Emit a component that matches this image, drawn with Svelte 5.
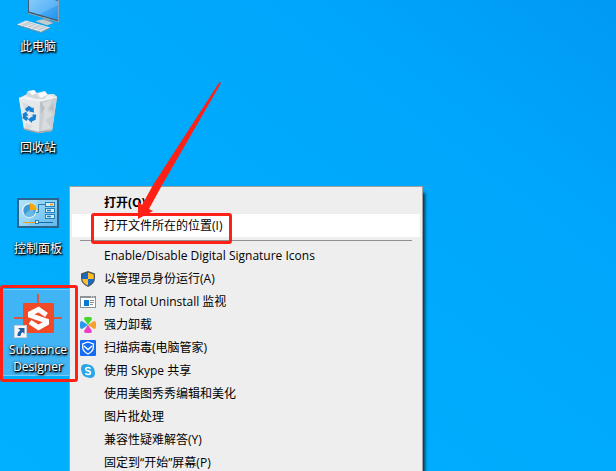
<script>
  const shortcuts = [
    { id: 'computer', label: '此电脑' },
    { id: 'bin', label: '回收站' },
    { id: 'panel', label: '控制面板' },
    { id: 'substance', label: 'Substance Designer', selected: true }
  ];

  const groups = [
    [
      { label: '打开(O)', strong: true },
      { label: '打开文件所在的位置(I)', active: true }
    ],
    [
      { label: 'Enable/Disable Digital Signature Icons' },
      { label: '以管理员身份运行(A)', icon: 'shield' },
      { label: '用 Total Uninstall 监视', icon: 'window' },
      { label: '强力卸载', icon: 'clover' },
      { label: '扫描病毒(电脑管家)', icon: 'guard' },
      { label: '使用 Skype 共享', icon: 'skype' },
      { label: '使用美图秀秀编辑和美化' },
      { label: '图片批处理' },
      { label: '兼容性疑难解答(Y)' },
      { label: '固定到“开始”屏幕(P)' }
    ]
  ];
</script>

<main class="desktop">
  <div class="shortcuts">
    {#each shortcuts as item}
      <button class="shortcut" class:selected={item.selected}>
        <svg class="picture" viewBox="0 0 48 50" aria-hidden="true">
          {#if item.id === 'computer'}
            <defs>
              <linearGradient id="screen" x1="0" y1="0" x2="1" y2="1">
                <stop offset="0" stop-color="#7cc8fb" />
                <stop offset="0.5" stop-color="#4fb0f8" />
                <stop offset="1" stop-color="#2193ee" />
              </linearGradient>
            </defs>
            <path d="M14 4L45 12V34L14 25Z" fill="#3c5a70" />
            <path d="M15 5L44 13V32L15 23.500Z" fill="url(#screen)" />
            <path d="M15 5L44 13V17L25 26.500L15 23.500Z" fill="#fff" opacity="0.15" />
            <path d="M44.500 12V34L14 25.200" fill="none" stroke="#8fa3b0" stroke-width="1" />
            <path d="M29 29L36 31V33L40 35L33 37.500L21 33.500L26 31.500L29 32.500Z" fill="#8fa1ab" />
            <path d="M22 33L28 31.500L39 35L33 37Z" fill="#c3ced4" />
            <path d="M3 36.500L12 32.500L36 39.500L27 44Z" fill="#eef1f3" />
            <path d="M3 36.500L27 44L36 39.500V40.500L27 45L3 37.500Z" fill="#7d8e99" />
            <path d="M6 35.500L29 42.500M8.500 34.500L31.500 41.500M11 33.500L34 40.500M9 38L17 34M14 39.500L22 35.500M19 41L27 37M24 42.500L32 38.500" stroke="#aebac1" stroke-width="0.700" />
          {:else if item.id === 'bin'}
            <path d="M5 9L11 6L40 5L43 8L38 42L24 44L10 40Z" fill="#dfe3e6" />
            <path d="M5 9L26 12L25 44L10 40Z" fill="#e6e9eb" />
            <path d="M26 12L43 8L38 42L25 44Z" fill="#c9ced2" />
            <path d="M8 9L12 6L14 2L20 1L23 4L31 2L34 6L39 7L38 10L26 12Z" fill="#f0f2f3" />
            <path d="M14 2L18 6L23 4L26 9L31 6L34 6L30 10L22 10L12 7Z" fill="#d2d7da" />
            <path d="M16 3L20 1L22 4L18 6ZM26 5L31 3L33 6L27 9Z" fill="#fff" />
            <path d="M29 14L38 11L33 21L39 25L32 31L37 39L27 42L30 27Z" fill="#d8dcdf" />
            <path d="M26 12L31 19L27 25ZM39 14L35 20L40 22Z" fill="#b9c0c5" />
            <path d="M8 13L15 16L11 22ZM12 34L19 37L15 41L11 39Z" fill="#d8dcdf" />
            <path d="M5 9L26 12L43 8" fill="none" stroke="#f4f6f7" stroke-width="1" />
            <path d="M10 40L24 43.500L38 41.500" fill="none" stroke="#9ca7ad" stroke-width="1.500" />
            <g fill="none" stroke="#1580d2" stroke-width="3.600">
              <path d="M12 21.500L15 19L18 21" />
              <path d="M20.500 25.500L20 29.500L16.500 31" />
              <path d="M13.500 30.500L10.500 28.500L11 25" />
            </g>
            <path d="M19.500 18L20 23.500L15 22.500ZM18 27.500V34L14 30.500ZM8 25.500L12 22.500L14.500 27Z" fill="#1580d2" />
          {:else if item.id === 'panel'}
            <defs>
              <linearGradient id="board" x1="0" y1="0" x2="1" y2="1">
                <stop offset="0" stop-color="#a4ddf8" />
                <stop offset="0.500" stop-color="#88cff5" />
                <stop offset="1" stop-color="#61b8ec" />
              </linearGradient>
            </defs>
            <rect x="3" y="8" width="42" height="30" fill="#27648f" />
            <rect x="5" y="10" width="38" height="26" fill="url(#board)" />
            <path d="M5 10H24L14 36H5Z" fill="#fff" opacity="0.15" />
            <circle cx="15.500" cy="20.500" r="7.500" fill="#e7f5fc" />
            <circle cx="15.500" cy="20.500" r="6.200" fill="#3e9bd7" />
            <path d="M10 25L19 17L20 25Q15 29 10 25" fill="#6ab8e4" />
            <path d="M16 20V13A7.500 7.500 0 0 1 23 20Z" fill="#f9a70f" />
            <path d="M22 22.500H24.500V14.500H31" fill="none" stroke="#2d7eb3" />
            <g fill="#d1effc" stroke="#2680b9">
              <rect x="31.500" y="12.500" width="9" height="4" />
              <rect x="31.500" y="18.500" width="9" height="4" />
              <rect x="31.500" y="24.500" width="9" height="4" />
            </g>
            <path d="M36 14.500H39" stroke="#f28c17" stroke-width="1.500" />
            <path d="M33 20.500H37M33 26.500H37" stroke="#217eb8" stroke-width="1.500" />
            <path d="M9 32.500H22" stroke="#f29c18" />
            <path d="M24 32.500H39" stroke="#176aa4" />
            <rect x="21.500" y="30.500" width="3" height="3" fill="#e5f7ff" stroke="#2680b9" />
          {:else}
            <path d="M24 3V12M0 27H9M40 27H48" stroke="#d9573f" stroke-width="2" />
            <rect x="9" y="12" width="31" height="30" rx="1" fill="#f04a26" />
            <path d="M32.500 24L24.500 18.500L16.500 22.500V24.500L32.500 30V32L24.500 36.500L16 31" fill="none" stroke="#fff" stroke-width="5" />
            <rect x="0.500" y="34.500" width="12" height="12" fill="#f5f7f9" stroke="#c7d0d8" />
            <path d="M4 37H10.500V43L8.500 41Q6.500 42.500 6.500 45H3.500Q3 41.500 6.300 39.200Z" fill="#1f5da5" />
          {/if}
        </svg>
        <span class="caption">{item.label}</span>
      </button>
    {/each}
  </div>

  <div class="menu" role="menu">
    {#each groups as group, index}
      {#if index > 0}
        <div class="separator" role="separator"></div>
      {/if}
      {#each group as entry}
        <button class="entry" class:active={entry.active} class:strong={entry.strong} role="menuitem">
          <svg class="glyph" viewBox="0 0 16 16" aria-hidden="true">
            {#if entry.icon === 'shield'}
              <path d="M8 0L15 2.500V7Q15 13 8 16Q1 13 1 7V2.500Z" fill="#4b5660" />
              <path d="M8 1.500L2.300 3.500V8H8Z" fill="#1669c5" />
              <path d="M8 1.500L13.700 3.500V8H8Z" fill="#ffbd29" />
              <path d="M2.300 8H8V14.500Q2.500 12 2.300 8Z" fill="#ffbd29" />
              <path d="M13.700 8H8V14.500Q13.500 12 13.700 8Z" fill="#1669c5" />
            {:else if entry.icon === 'window'}
              <rect x="0.500" y="2.500" width="15" height="11" fill="#fff" stroke="#8b9298" />
              <path d="M0 3H16" stroke="#8b9298" stroke-width="2" />
              <path d="M11 3H12M13 3H14" stroke="#fff" />
              <rect x="4" y="6" width="5" height="6" fill="#0878d4" />
              <path d="M10 6.500H14M10 8.500H14M10 10.500H13" stroke="#8b9298" />
            {:else if entry.icon === 'clover'}
              <path d="M8 8L4 2Q4 0 6 0H10Q12 0 12 2Z" fill="#45d62b" />
              <path d="M8 8L14 4Q16 4 16 6V10Q16 12 14 12Z" fill="#f7a027" />
              <path d="M8 8L12 14Q12 16 10 16H6Q4 16 4 14Z" fill="#ec3fc5" />
              <path d="M8 8L2 12Q0 12 0 10V6Q0 4 2 4Z" fill="#2999ee" />
            {:else if entry.icon === 'guard'}
              <rect width="16" height="16" rx="1" fill="#146cf5" />
              <path d="M8 2L13.300 4V7.500Q13 11.500 8 14Q3 11.500 2.700 7.500V4Z" fill="none" stroke="#fff" stroke-width="1.300" />
              <path d="M4 6L8 9.500L12 6" fill="none" stroke="#fff" stroke-width="1.500" />
            {:else if entry.icon === 'skype'}
              <circle cx="5.500" cy="5.500" r="4.500" fill="#29a7e6" />
              <circle cx="10.500" cy="10.500" r="4.500" fill="#29a7e6" />
              <circle cx="8" cy="8" r="6.500" fill="#29a7e6" />
              <path d="M10.500 5.800Q10 4.500 8 4.500Q5.700 4.500 5.700 6.200Q5.700 7.500 8 7.900Q10.500 8.300 10.500 9.800Q10.500 11.500 8 11.500Q6 11.500 5.500 10" fill="none" stroke="#fff" stroke-width="1.600" />
            {/if}
          </svg>
          <span>{entry.label}</span>
        </button>
      {/each}
    {/each}
  </div>

  <div class="mark mark-shortcut"></div>
  <div class="mark mark-entry"></div>
  <svg class="arrow" viewBox="0 0 84 137" aria-hidden="true">
    <path d="M82.500 0L84 1L24 105L12 127L16 129L1 137L1 119L5 123L16 103Z" fill="#ff2116" />
  </svg>
</main>

<style>
  :global(body) {
    margin: 0;
  }

  .desktop {
    position: relative;
    height: 100vh;
    overflow: hidden;
    background: linear-gradient(to top right, #00b1fe 0%, #00aafc 50%, #00a6fb 75%, #0099f4 100%);
    font-family: 'Open Sans', 'Noto Sans CJK SC', sans-serif;
    font-size: 12px;
  }

  button {
    margin: 0;
    border: 0;
    padding: 0;
    background: none;
    font: inherit;
    color: inherit;
  }

  .shortcuts {
    display: flex;
    flex-direction: column;
    gap: 14px;
    width: 74px;
    margin: -14px 0 0 1px;
  }

  .shortcut {
    box-sizing: border-box;
    display: flex;
    flex-direction: column;
    align-items: center;
    height: 87px;
    border: 1px solid transparent;
    padding-top: 1px;
  }

  .shortcut.selected {
    border-color: #7bcaf8;
    background: #40b4f4;
  }

  .picture {
    flex: none;
    width: 48px;
    height: 50px;
  }

  .caption {
    line-height: 17px;
    color: #fff;
    text-align: center;
    text-shadow: 1px 1px 1px #000, 0 1px 3px #000, 1px 1px 2px #000;
  }

  .menu {
    position: absolute;
    top: 186px;
    left: 69px;
    box-sizing: border-box;
    display: flex;
    flex-direction: column;
    width: 354px;
    border: 1px solid #a0a0a0;
    padding: 4px 2px;
    background: #eee;
    box-shadow: 4px 5px 3px -2px rgba(0, 0, 0, 0.7);
    color: #000;
  }

  .entry {
    display: flex;
    align-items: center;
    gap: 8px;
    height: 23px;
    padding-left: 8px;
    line-height: 17px;
    white-space: nowrap;
    text-align: left;
  }

  .entry.active {
    background: #fff;
  }

  .entry.strong {
    font-weight: 700;
  }

  .glyph {
    flex: none;
    width: 16px;
    height: 16px;
  }

  .separator {
    height: 1px;
    margin: 3px 8px;
    background: #919191;
  }

  .mark {
    position: absolute;
    box-sizing: border-box;
    border: 3px solid #ff2116;
    border-radius: 3px;
    pointer-events: none;
  }

  .mark-shortcut {
    top: 285px;
    left: 0;
    width: 78px;
    height: 97px;
  }

  .mark-entry {
    top: 213px;
    left: 91px;
    width: 141px;
    height: 31px;
  }

  .arrow {
    position: absolute;
    top: 82px;
    left: 137px;
    width: 84px;
    height: 137px;
    pointer-events: none;
  }
</style>
